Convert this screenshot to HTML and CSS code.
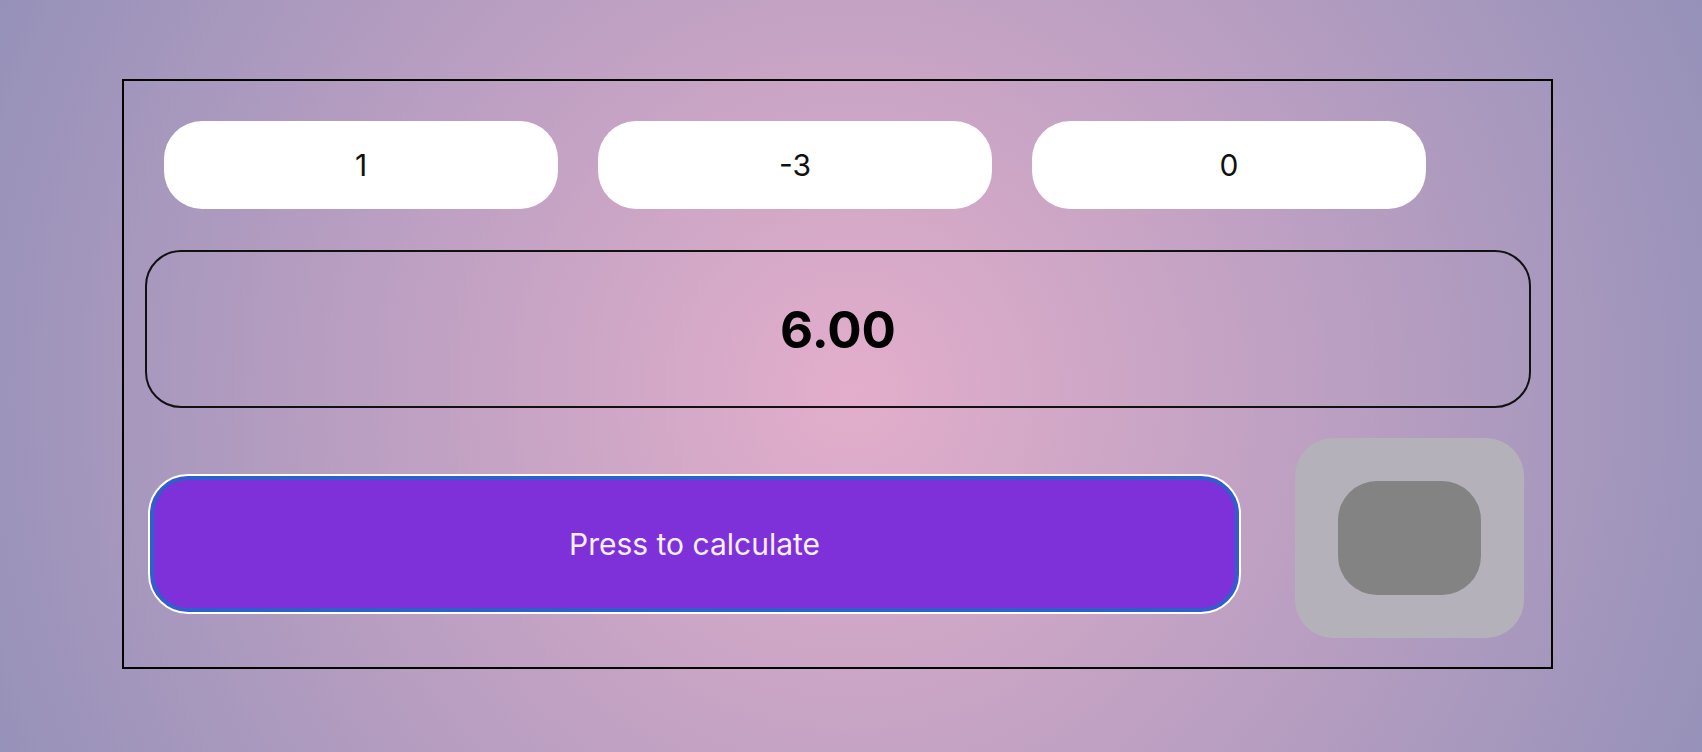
FILE: index.html
```html
<!DOCTYPE html>
<html lang="en">
<head>
<meta charset="utf-8">
<title>Calculator</title>
<link rel="stylesheet" href="styles.css">
</head>
<body>
<main class="card">
  <div class="inputs">
    <div class="field">1</div>
    <div class="field">-3</div>
    <div class="field">0</div>
  </div>
  <div class="result">6.00</div>
  <div class="actions">
    <button class="calc">Press to calculate</button>
    <div class="toggle"><div class="knob"></div></div>
  </div>
</main>
</body>
</html>
```
FILE: styles.css
```css
html, body {
  margin: 0;
  height: 100%;
}
body {
  background: radial-gradient(circle 1040px at 50% 52%, #e3aecb 0%, #8d8eb7 100%);
  font-family: Inter, "Noto Sans", sans-serif;
  overflow: hidden;
}
.card {
  box-sizing: border-box;
  width: 1431px;
  height: 590px;
  margin: 79px 0 0 122px;
  border: 2px solid #000;
  display: flex;
  flex-direction: column;
}
.inputs {
  display: flex;
  gap: 40px;
  padding: 40px 0 0 40px;
}
.field {
  width: 394px;
  height: 88px;
  background: #fff;
  border-radius: 38px;
  display: flex;
  align-items: center;
  justify-content: center;
  font-size: 30px;
  color: #111;
}
.result {
  box-sizing: border-box;
  height: 158px;
  margin: 41px 20px 0 21px;
  border: 2px solid #111;
  border-radius: 36px;
  display: flex;
  align-items: center;
  justify-content: center;
  font-size: 51px;
  font-weight: 700;
  color: #000;
}
.actions {
  display: flex;
  align-items: flex-start;
  gap: 54px;
  margin-top: 30px;
  padding-left: 24px;
}
.calc {
  box-sizing: border-box;
  width: 1093px;
  height: 140px;
  margin-top: 36px;
  border: 2px solid #fff;
  border-radius: 40px;
  box-shadow: inset 0 0 0 4px #2f5fca;
  background: #7f31d9;
  color: #f6effc;
  font-family: Inter, "Noto Sans", sans-serif;
  font-size: 30px;
  font-weight: 400;
  padding: 0;
}
.toggle {
  box-sizing: border-box;
  width: 229px;
  height: 200px;
  padding: 43px;
  border-radius: 38px;
  background: #b5b1bb;
}
.knob {
  width: 143px;
  height: 114px;
  border-radius: 39px;
  background: #838383;
}
```
